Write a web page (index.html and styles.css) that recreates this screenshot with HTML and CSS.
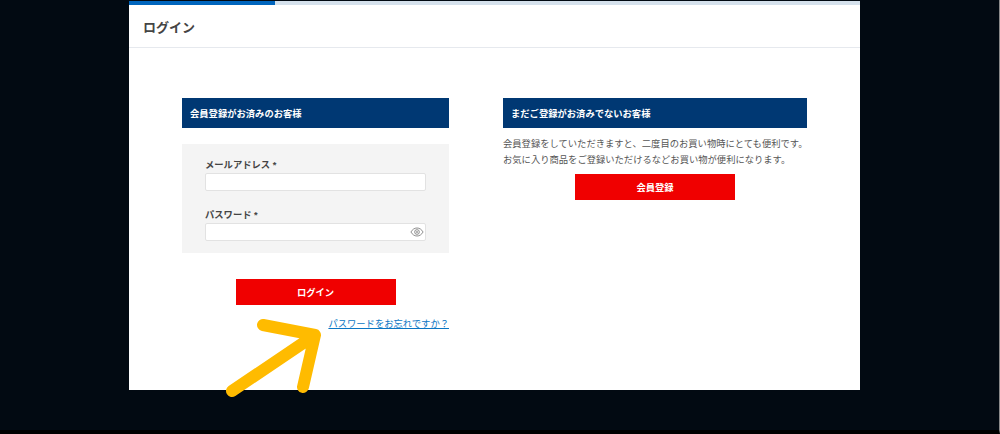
FILE: index.html
```html
<!DOCTYPE html>
<html lang="ja">
<head>
<meta charset="utf-8">
<title>ログイン</title>
<link rel="stylesheet" href="styles.css">
</head>
<body>
<main class="panel">
  <div class="progress"><div class="progress-fill"></div></div>
  <header class="page-head"><h1>ログイン</h1></header>
  <div class="columns">
    <section class="col-left">
      <h2 class="band">会員登録がお済みのお客様</h2>
      <form class="form-box">
        <label class="field-label">メールアドレス *</label>
        <div class="input"></div>
        <label class="field-label second">パスワード *</label>
        <div class="input">
          <svg class="eye" viewBox="0 0 16 12" width="14" height="10"><path d="M.7 6C2.6 2.8 5 1.2 8 1.2S13.4 2.8 15.3 6C13.400 9.200 11 10.800 8 10.800S2.600 9.200.7 6Z" fill="none" stroke="#777" stroke-width="1"/><circle cx="8" cy="6" r="2.800" fill="none" stroke="#777" stroke-width="1"/><circle cx="8" cy="6" r="1.200" fill="#999"/></svg>
        </div>
      </form>
      <div class="btn-row login-row"><a class="btn">ログイン</a></div>
      <div class="forgot"><a href="#">パスワードをお忘れですか？</a></div>
    </section>
    <section class="col-right">
      <h2 class="band">まだご登録がお済みでないお客様</h2>
      <p class="intro">会員登録をしていただきますと、二度目のお買い物時にとても便利です。<br>お気に入り商品をご登録いただけるなどお買い物が便利になります。</p>
      <div class="btn-row"><a class="btn">会員登録</a></div>
    </section>
  </div>
</main>
<svg class="arrow" viewBox="0 0 1000 434" width="1000" height="434"><path d="M232 391 315 335M263 325 315 335 303 387" fill="none" stroke="#ffbb00" stroke-width="12" stroke-linecap="round" stroke-linejoin="round"/></svg>
</body>
</html>
```
FILE: styles.css
```css
* { box-sizing: border-box; }
html, body { margin: 0; height: 434px; overflow: hidden; }
body {
  background: #020a12;
  border-right: 1px solid #8a8a8a;
  border-bottom: 4px solid #000;
  font-family: "Liberation Sans", "Noto Sans CJK JP", sans-serif;
  color: #444;
  position: relative;
}
.panel {
  margin-left: 129px;
  width: 731px;
  height: 390px;
  background: #fff;
  border-top: 1px solid #020a12;
}
.progress { height: 4px; background: #d5e1ec; }
.progress-fill { width: 146px; height: 100%; background: #0065bd; }
.page-head {
  height: 43px;
  border-bottom: 1px solid #e6e9ee;
  padding-left: 14px;
  display: flex;
  align-items: center;
}
.page-head h1 { margin: 0; font-size: 13px; font-weight: 700; color: #444; }
.columns {
  display: flex;
  gap: 54px;
  padding: 50px 0 0 53px;
}
.col-left { width: 267px; }
.col-right { width: 304px; }
.band {
  margin: 0;
  height: 30px;
  display: flex;
  align-items: center;
  padding-left: 8px;
  background: #003873;
  color: #fff;
  font-size: 9.3px;
  font-weight: 700;
}
.form-box {
  margin-top: 16px;
  height: 109px;
  padding: 14px 23px 0;
  background: #f4f4f4;
}
.field-label {
  display: block;
  height: 15px;
  line-height: 14px;
  font-size: 9.3px;
  font-weight: 700;
  color: #444;
}
.field-label.second { margin-top: 17px; }
.input {
  height: 18px;
  background: #fff;
  border: 1px solid #e2e2e2;
  border-radius: 2px;
  display: flex;
  align-items: center;
  justify-content: flex-end;
  padding-right: 1px;
}
.eye { display: block; }
.btn-row { display: flex; justify-content: center; }
.login-row { margin-top: 26px; }
.btn {
  width: 160px;
  height: 26px;
  display: flex;
  align-items: center;
  justify-content: center;
  background: #f00000;
  color: #fff;
  font-size: 9.3px;
  font-weight: 700;
}
.forgot { margin-top: 11px; text-align: right; font-size: 9.3px; line-height: 16px; }
.forgot a { color: #0a76c4; }
.intro {
  margin: 8px 0 6px;
  font-size: 9.3px;
  line-height: 16px;
  color: #555;
  white-space: nowrap;
}
.arrow { position: absolute; left: 0; top: 0; pointer-events: none; }
```
